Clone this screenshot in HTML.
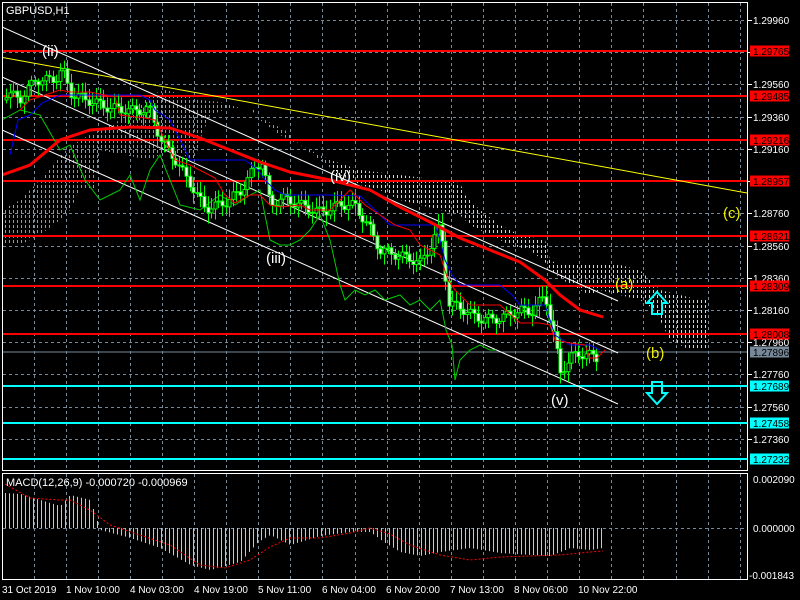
<!DOCTYPE html>
<html><head><meta charset="utf-8"><style>
html,body{margin:0;padding:0;background:#000;width:800px;height:600px;overflow:hidden}
svg{display:block}
text{font-family:"Liberation Sans",sans-serif}
</style></head><body>
<svg id="s" width="800" height="600" xmlns="http://www.w3.org/2000/svg">
<defs>
<pattern id="po" width="4" height="5" patternUnits="userSpaceOnUse"><rect x="1" y="0" width="1" height="3" fill="#f08040"/></pattern>
<pattern id="pw" width="4" height="5" patternUnits="userSpaceOnUse"><rect x="1" y="0" width="1" height="3" fill="#e8d0c8"/></pattern>
<clipPath id="cl"><rect x="0" y="0" width="330" height="470"/></clipPath>
<clipPath id="cr"><rect x="330" y="0" width="420" height="470"/></clipPath>
<clipPath id="main"><rect x="2" y="2" width="745" height="468"/></clipPath>
</defs>
<rect width="800" height="600" fill="#000"/>
<g id="grid" stroke="#778899" stroke-dasharray="3,3" stroke-width="1"></g>
<g clip-path="url(#main)">
<polygon id="cloud" fill="url(#po)" clip-path="url(#cl)"/>
<polygon id="cloud2" fill="url(#pw)" clip-path="url(#cr)"/>
<g stroke-width="2">
<line x1="0" y1="51" x2="747" y2="51" stroke="#f00"/>
<line x1="0" y1="96" x2="747" y2="96" stroke="#f00"/>
<line x1="0" y1="140" x2="747" y2="140" stroke="#f00"/>
<line x1="0" y1="181" x2="747" y2="181" stroke="#f00"/>
<line x1="0" y1="236" x2="747" y2="236" stroke="#f00"/>
<line x1="0" y1="286" x2="747" y2="286" stroke="#f00"/>
<line x1="0" y1="334" x2="747" y2="334" stroke="#f00"/>
<line x1="0" y1="386" x2="747" y2="386" stroke="#0ff"/>
<line x1="0" y1="423" x2="747" y2="423" stroke="#0ff"/>
<line x1="0" y1="459" x2="747" y2="459" stroke="#0ff"/>
</g>
<line x1="0" y1="352" x2="747" y2="352" stroke="#778899"/>
<line x1="0" y1="57" x2="747" y2="193" stroke="#ff0"/>
<line x1="2" y1="27" x2="618" y2="301" stroke="#fff"/>
<line x1="2" y1="77" x2="618" y2="353" stroke="#fff"/>
<line x1="2" y1="130" x2="618" y2="404" stroke="#fff"/>
<polyline id="grn" fill="none" stroke="#0c0" stroke-width="1"/>
<g id="candles"></g>
<polyline id="blue" fill="none" stroke="#00f" stroke-width="1"/>
<polyline id="redt" fill="none" stroke="#f00" stroke-width="1"/>
<polyline id="ma" fill="none" stroke="#f00" stroke-width="3"/>
</g>
<g font-size="15" fill="#fff">
<text x="42" y="56">(ii)</text>
<text x="266" y="263">(iii)</text>
<text x="330" y="181">(iv)</text>
<text x="551" y="405">(v)</text>
</g>
<g font-size="15" fill="#ee0">
<text x="615" y="289">(a)</text>
<text x="646" y="358">(b)</text>
<text x="723" y="218">(c)</text>
</g>
<path d="M652,314 L662,314 L662,303 L667,303 L657,292 L647,303 L652,303 Z" fill="none" stroke="#0ff" stroke-width="2"/>
<path d="M652,382 L662,382 L662,393 L667,393 L657,404 L647,393 L652,393 Z" fill="none" stroke="#0ff" stroke-width="2"/>
<text x="6" y="14" font-size="11" fill="#fff">GBPUSD,H1</text>
<g id="hist" stroke="#c8c8c8" stroke-width="1"></g>
<polyline id="sig" fill="none" stroke="#f00" stroke-width="1" stroke-dasharray="2,2"/>
<text x="6" y="486" font-size="11" fill="#fff">MACD(12,26,9) -0.000720 -0.000969</text>
<rect x="2.5" y="2.5" width="745" height="468" fill="none" stroke="#fff"/>
<rect x="2.5" y="473.5" width="745" height="106" fill="none" stroke="#fff"/>
<g id="axis" font-size="10" fill="#fff"></g>
<g font-size="10" fill="#fff">
<text x="2" y="593">31 Oct 2019</text><text x="66" y="593">1 Nov 10:00</text><text x="130" y="593">4 Nov 03:00</text>
<text x="194" y="593">4 Nov 19:00</text><text x="258" y="593">5 Nov 11:00</text><text x="322" y="593">6 Nov 04:00</text>
<text x="386" y="593">6 Nov 20:00</text><text x="450" y="593">7 Nov 13:00</text><text x="514" y="593">8 Nov 06:00</text>
<text x="578" y="593">10 Nov 22:00</text>
<text x="753" y="483">0.002090</text><text x="753" y="532">0.000000</text><text x="749" y="579">-0.001843</text>
</g>
</svg>
<script>
(function(){
var NS="http://www.w3.org/2000/svg";
function el(p,t,a){var e=document.createElementNS(NS,t);for(var k in a)e.setAttribute(k,a[k]);p.appendChild(e);return e}
function pts(a){return a.map(function(p){return p[0]+","+p[1]}).join(" ")}
function interp(a,x){for(var i=1;i<a.length;i++){if(x<=a[i][0]){var t=(x-a[i-1][0])/(a[i][0]-a[i-1][0]);return a[i-1][1]+t*(a[i][1]-a[i-1][1])}}return a[a.length-1][1]}
var g=document.getElementById("grid");
for(var x=33.5;x<747;x+=32.1){var xx=Math.round(x)+.5;el(g,"line",{x1:xx,y1:3,x2:xx,y2:470});el(g,"line",{x1:xx,y1:474,x2:xx,y2:579});}
var ax=document.getElementById("axis");
for(var i=0;i<14;i++){var p=1.2996-0.002*i;var y=20+(1.2996-p)*16111;if(y>468)break;var yy=Math.round(y)+.5;
el(g,"line",{x1:3,y1:yy,x2:747,y2:yy});el(ax,"line",{x1:747,y1:yy,x2:752,y2:yy,stroke:"#fff"});
var t=el(ax,"text",{x:753,y:Math.round(y)+4});t.textContent=p.toFixed(5);}
el(g,"line",{x1:3,y1:528.5,x2:747,y2:528.5});
var labs=[[51,"1.29765","#f00","#000"],[96,"1.29485","#f00","#000"],[140,"1.29216","#f00","#000"],[181,"1.28957","#f00","#000"],[236,"1.28621","#f00","#000"],[286,"1.28309","#f00","#000"],[334,"1.28008","#f00","#000"],[352,"1.27896","#778899","#000"],[386,"1.27689","#0ff","#000"],[423,"1.27458","#0ff","#000"],[459,"1.27232","#0ff","#000"]];
labs.forEach(function(l){el(ax,"rect",{x:750,y:l[0]-5.5,width:39,height:11,fill:l[2]});var t=el(ax,"text",{x:753,y:l[0]+4,fill:l[3]});t.textContent=l[1];});
var cloud=[[2,210],[20,200],[40,180],[60,155],[80,140],[100,130],[120,120],[140,105],[150,95],[165,90],[185,95],[200,100],[220,102],[240,108],[255,110],[260,120],[280,135],[300,145],[330,160],[360,170],[400,175],[440,180],[460,183],[465,195],[480,210],[500,225],[520,235],[545,240],[550,260],[560,265],[580,265],[600,265],[620,265],[640,270],[660,290],[680,295],[700,300],[708,300],[708,350],[690,350],[670,340],[655,310],[640,300],[600,290],[590,295],[570,285],[550,270],[545,262],[530,250],[510,245],[490,235],[470,225],[460,215],[440,210],[420,205],[400,200],[380,190],[360,185],[340,175],[320,160],[300,145],[285,130],[265,120],[250,110],[230,108],[210,115],[200,140],[195,160],[170,150],[150,160],[100,150],[95,190],[80,190],[70,210],[60,220],[40,235],[20,245],[2,245]];
document.getElementById("cloud").setAttribute("points",pts(cloud));
document.getElementById("cloud2").setAttribute("points",pts(cloud));
document.getElementById("ma").setAttribute("points",pts([[2,175],[30,165],[60,140],[90,130],[130,127],[170,128],[200,138],[230,150],[260,162],[290,172],[330,180],[370,190],[400,207],[430,222],[460,238],[490,250],[520,262],[545,280],[560,295],[580,310],[603,317]]));
document.getElementById("grn").setAttribute("points",pts([[2,120],[20,110],[40,115],[60,150],[70,145],[85,180],[100,200],[110,195],[120,190],[130,175],[140,200],[150,170],[160,155],[170,180],[180,205],[200,210],[220,195],[235,205],[250,195],[260,190],[270,240],[280,245],[290,245],[300,240],[310,230],[320,215],[330,240],[340,285],[345,300],[355,290],[365,295],[375,290],[385,300],[400,295],[410,305],[420,300],[430,310],[440,300],[446,330],[452,345],[455,380],[460,360],[470,350],[480,345],[490,350],[496,350]]));
document.getElementById("blue").setAttribute("points",pts([[10,155],[18,120],[30,115],[42,103],[60,95],[90,95],[140,95],[150,100],[155,110],[170,120],[190,160],[220,160],[245,160],[258,170],[265,180],[275,190],[285,195],[300,195],[330,195],[360,196],[375,210],[390,225],[435,225],[440,240],[445,260],[452,275],[460,285],[500,285],[512,295],[520,305],[545,305],[555,335],[570,345],[590,345],[600,350]]));
document.getElementById("redt").setAttribute("points",pts([[20,110],[30,100],[60,90],[70,92],[90,92],[115,97],[120,115],[145,118],[155,120],[165,140],[175,160],[190,165],[215,178],[225,195],[235,203],[250,195],[260,195],[270,205],[280,207],[300,205],[310,210],[330,210],[340,200],[350,190],[365,205],[380,215],[395,225],[410,230],[420,245],[430,250],[440,255],[448,280],[455,290],[470,305],[500,305],[520,323],[540,323],[550,325],[555,340],[570,343],[585,345],[590,358],[597,358],[605,350]]));
var path=[[5,100],[20,100],[35,75],[55,70],[62,60],[70,85],[90,100],[110,115],[130,120],[150,115],[160,140],[175,155],[190,175],[205,200],[225,200],[240,195],[255,175],[262,170],[270,215],[280,205],[300,205],[320,205],[340,195],[355,200],[370,230],[380,255],[400,265],[420,270],[430,250],[440,225],[448,300],[460,300],[480,310],[500,315],[520,315],[530,320],[545,305],[555,350],[560,380],[570,360],[585,350],[600,352]];
var c=document.getElementById("candles");var prev=interp(path,4);
for(var x=6;x<=600;x+=3.6){var y=interp(path,x)+Math.sin(x*1.7)*9+Math.sin(x*0.37)*5;var o=prev;var hi=Math.min(o,y)-3-Math.abs(Math.sin(x*0.9))*8,lo=Math.max(o,y)+3+Math.abs(Math.cos(x*1.3))*8;
var xr=Math.round(x)+.5;el(c,"line",{x1:xr,y1:hi,x2:xr,y2:lo,stroke:"#0f0"});
var bt=Math.min(o,y),h=Math.max(1,Math.abs(o-y));el(c,"rect",{x:xr-1.5,y:bt,width:3,height:h,fill:(y<o?"#000":"#fff"),stroke:"#0f0","stroke-width":1});prev=y;}
var hv=[[5,493],[20,494],[40,500],[60,506],[70,495],[90,500],[100,530],[130,538],[160,548],[190,565],[210,570],[240,562],[258,542],[270,535],[290,545],[320,536],[350,532],[370,532],[385,543],[400,552],[420,556],[440,552],[470,548],[500,553],[530,555],[550,556],[570,548],[590,550],[603,548]];
var hg=document.getElementById("hist");
for(var x=5;x<=603;x+=4){var y=interp(hv,x);el(hg,"line",{x1:x+.5,y1:528,x2:x+.5,y2:y});}
document.getElementById("sig").setAttribute("points",pts([[5,484],[30,498],[60,500],[70,500],[90,510],[110,525],[140,535],[170,545],[200,565],[225,568],[250,560],[270,547],[290,538],[320,538],[350,533],[370,528],[390,534],[410,545],[440,555],[470,560],[500,557],[530,556],[560,555],[590,552],[603,551]]));
})();
</script>
</body></html>
